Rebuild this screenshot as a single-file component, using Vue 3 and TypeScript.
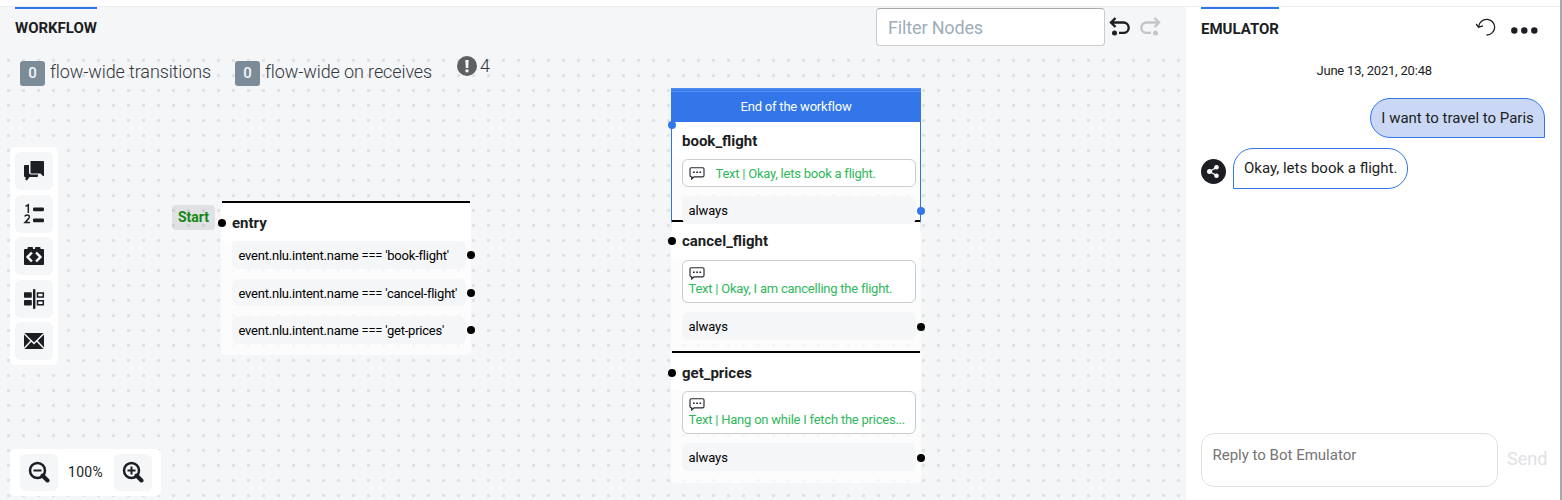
<script setup lang="ts">
interface Row { label: string }
interface FlowNode {
  id: string
  left: number
  top: number
  height: number
  message?: string
  inline?: boolean
  rows: Row[]
  selected?: boolean
}

const nodes: FlowNode[] = [
  {
    id: 'entry', left: 221, top: 201, height: 154,
    rows: [
      { label: "event.nlu.intent.name === 'book-flight'" },
      { label: "event.nlu.intent.name === 'cancel-flight'" },
      { label: "event.nlu.intent.name === 'get-prices'" },
    ],
  },
  { id: 'book_flight', left: 671, top: 88, height: 144, selected: true, inline: true, message: 'Okay, lets book a flight.', rows: [{ label: 'always' }] },
  { id: 'cancel_flight', left: 671, top: 220, height: 131, message: 'Okay, I am cancelling the flight.', rows: [{ label: 'always' }] },
  { id: 'get_prices', left: 671, top: 351, height: 132, message: 'Hang on while I fetch the prices...', rows: [{ label: 'always' }] },
]
const counters = ['flow-wide transitions', 'flow-wide on receives']
const tools = ['say', 'execute', 'code', 'split', 'mail']
</script>

<template>
  <div class="app">
    <div class="strip"></div>
    <main class="studio">
      <section class="canvas">
        <header class="bar">
          <h1 class="tab workflow"><span>WORKFLOW</span></h1>
          <div class="actions">
            <input class="filter" placeholder="Filter Nodes" />
            <svg class="undo" width="21" height="19" viewBox="0 0 21 19"><path d="M6.500 1 2 5.500l4.500 4.500M2.500 5.500H14.500a5.200 5.200 0 0 1 0 10.400H10" /><circle cx="5.500" cy="16" r="2.500" /></svg>
            <svg class="undo redo" width="21" height="19" viewBox="0 0 21 19"><path d="M6.500 1 2 5.500l4.500 4.500M2.500 5.500H14.500a5.200 5.200 0 0 1 0 10.400H10" /><circle cx="5.500" cy="16" r="2.500" /></svg>
          </div>
        </header>
        <div class="counters">
          <div v-for="c in counters" :key="c" class="counter"><b>0</b><span>{{ c }}</span></div>
          <div class="issues">
            <svg width="20" height="20" viewBox="0 0 20 20"><circle cx="10" cy="10" r="10" fill="#5f6062" /><path d="M8.300 4h3.400l-.5 8H8.800zM8.500 13.500h3v2.700h-3z" fill="#f5f6f8" /></svg>
            <span>4</span>
          </div>
        </div>

        <div class="start">Start</div>
        <article
          v-for="n in nodes" :key="n.id" class="node" :class="{ selected: n.selected }"
          :style="{ left: n.left + 'px', top: n.top + 'px', height: n.height + 'px' }"
        >
          <div v-if="n.selected" class="banner">End of the workflow</div>
          <div v-else class="rule"></div>
          <div class="head" :class="{ overlap: n.id === 'cancel_flight' }"><i class="port in"></i>{{ n.id }}</div>
          <div v-if="n.message" class="message" :class="{ inline: n.inline }">
            <svg width="16" height="13" viewBox="0 0 16 13"><path d="M2.200.7H13.800Q15 .7 15 1.900V8.600Q15 9.800 13.800 9.800H5L2.700 12V9.800H2.200Q1 9.800 1 8.600V1.900Q1 .7 2.200.7Z" fill="none" stroke="#24272c" stroke-width="1.150" /><path d="M4 4.500h1.700v1.500H4zM7.200 4.500h1.700v1.500H7.200zM10.400 4.500h1.700v1.500h-1.700z" fill="#24272c" /></svg>
            <span>Text | {{ n.message }}</span>
          </div>
          <div class="rows">
            <div v-for="r in n.rows" :key="r.label" class="row"><span>{{ r.label }}</span><i class="port out"></i></div>
          </div>
        </article>

        <nav class="tools">
          <button v-for="t in tools" :key="t">
            <svg width="22" height="22" viewBox="0 0 22 22">
              <g v-if="t === 'say'"><path d="M7.500 1H20q1 0 1 1V16l-1 0-2.500-2.500H8.500q-1 0-1-1z" /><path d="M1 6q0-1 1-1H6v7.500q0 2 2 2h7v1.500q0 1-1 1H6.500L4 20.500 2.500 20V17H2q-1 0-1-1z" /></g>
              <g v-else-if="t === 'execute'"><path d="M2.500 3.300 5.300 1.800V10M1.800 13.500Q2.200 12 4.200 12 6.400 12 6.400 14 6.400 15 2 19.500H7" fill="none" stroke="#1c1e23" stroke-width="1.500" /><rect x="10" y="4.500" width="11" height="3.800" rx="1.300" /><rect x="10" y="15.500" width="11" height="3.800" rx="1.300" /></g>
              <g v-else-if="t === 'code'"><path d="M2 4H4.500V3q0-1 1-1H9q1 0 1 1V4H12V3q0-1 1-1H16.500q1 0 1 1V4H20q1 0 1 1V19q0 1-1 1H2q-1 0-1-1V5q0-1 1-1z" /><path d="M8.900 7.500 4.600 12 8.900 16.500M13.100 7.500 17.400 12 13.100 16.500" fill="none" stroke="#fff" stroke-width="2.500" /></g>
              <g v-else-if="t === 'split'"><rect x="1" y="4.200" width="7.800" height="5.500" rx=".7" /><rect x="1" y="12" width="7.800" height="5.500" rx=".7" /><rect x="10" y="1" width="2.400" height="20" rx="1" /><path d="M14.500 5H20.300V9H14.500zM14.500 12.700H20.300V16.700H14.500z" fill="none" stroke="#1c1e23" stroke-width="1.500" /></g>
              <g v-else><path d="M1 3H21V19H1z" /><path d="M1 3.500 11 13.500 21 3.500M1 18.500 8 11M21 18.500 14 11" fill="none" stroke="#f5f6f8" stroke-width="1.500" /></g>
            </svg>
          </button>
        </nav>

        <div class="zoom">
          <button><svg width="22" height="22" viewBox="0 0 22 22"><path d="M14.500 14.500 19.500 19.500" class="handle" /><circle cx="9.500" cy="9.500" r="7.500" class="lens" /><path d="M5.500 9.500h8" class="sign" /></svg></button>
          <span>100%</span>
          <button><svg width="22" height="22" viewBox="0 0 22 22"><path d="M14.500 14.500 19.500 19.500" class="handle" /><circle cx="9.500" cy="9.500" r="7.500" class="lens" /><path d="M5.500 9.500h8M9.500 5.500v8" class="sign" /></svg></button>
        </div>
      </section>

      <aside class="emulator">
        <header class="ehead">
          <h2 class="tab"><span>EMULATOR</span></h2>
          <svg class="reload" width="21" height="19" viewBox="0 0 21 19"><path d="M3.700 8.500A8 7.800 0 1 1 11.500 17M1.200 6 3.500 9.200 8 7.800" fill="none" stroke="#1c1e23" stroke-width="1.300" /></svg>
          <svg class="more" width="27" height="7" viewBox="0 0 27 7"><circle cx="3.300" cy="3.500" r="3.200" /><circle cx="13.300" cy="3.500" r="3.200" /><circle cx="23.300" cy="3.500" r="3.200" /></svg>
        </header>
        <time>June 13, 2021, 20:48</time>
        <div class="bubble user"><span>I want to travel to Paris</span></div>
        <div class="reply">
          <svg width="25" height="25" viewBox="0 0 25 25"><circle cx="12.500" cy="12.500" r="12.500" fill="#1c1e23" /><path d="M15.500 8.500 8.500 12.500 15.500 16.500" fill="none" stroke="#fff" stroke-width="1.300" /><circle cx="15.500" cy="8.300" r="2.300" fill="#fff" /><circle cx="8.500" cy="12.500" r="2.500" fill="#fff" /><circle cx="15.500" cy="16.700" r="2.300" fill="#fff" /></svg>
          <div class="bubble bot"><span>Okay, lets book a flight.</span></div>
        </div>
        <footer class="composer">
          <textarea placeholder="Reply to Bot Emulator"></textarea>
          <span>Send</span>
        </footer>
      </aside>
    </main>
  </div>
</template>

<style>
html, body { overflow: hidden; }
</style>
<style scoped>
.app { width: 1562px; height: 500px; display: flex; flex-direction: column; background: #fff; color: #1c1e23; font-family: Roboto, "Liberation Sans", sans-serif; box-sizing: border-box; border-right: 2px solid #a9a9a9; overflow: hidden; }
.app * { box-sizing: border-box; }
.strip { height: 7px; flex: none; border-bottom: 1px solid #ebedef; }
.studio { display: flex; height: 493px; }
.canvas { position: relative; width: 1186px; flex: none; background-color: #f5f6f8; background-image: linear-gradient(#f5f6f8, #f5f6f8), conic-gradient(from 270deg at 3px 3px, #e1e2e4 90deg, transparent 0); background-size: 100% 50px, 15px 15px; background-position: 0 0, 7px 7px; background-repeat: no-repeat, repeat; }
.bar { display: flex; justify-content: space-between; height: 43px; padding-left: 15px; padding-right: 25px; }
.tab { margin: 0; border-top: 2px solid #3276ea; font-size: 15px; line-height: 18px; font-weight: 700; padding-top: 10px; white-space: nowrap; height: 34px; }
.workflow { width: 82px; }
.actions { display: flex; padding-top: 1px; }
.filter { width: 229px; height: 38px; border: 1px solid #ccc; border-top-color: #aaa; border-radius: 4px; background: #fff; padding: 0 12px 0 11px; font: 400 18px Roboto, sans-serif; letter-spacing: -.15px; outline: none; }
.filter::placeholder { color: #a0adb8; }
.undo { margin: 9px 0 0 4px; fill: none; stroke: #1c1e23; stroke-width: 2.4; }
.undo circle { fill: #1c1e23; stroke: none; }
.redo { transform: scaleX(-1); opacity: .22; margin-left: 10px; }
.counters { display: flex; padding-left: 20px; height: 40px; color: #32373d; font-size: 18px; font-weight: 300; line-height: 22px; }
.counter { display: flex; align-items: flex-start; padding-top: 11px; width: 215px; white-space: nowrap; letter-spacing: -.11px; }
.counter b { width: 25px; height: 25px; margin-right: 5px; border-radius: 3px; background: #7b8b98; color: #f5f6f8; font-size: 15px; line-height: 24px; font-weight: 500; text-align: center; }
.issues { display: flex; gap: 3px; padding-top: 6px; margin-left: 7px; }
.issues span { margin-top: -1px; }
.start { position: absolute; left: 172px; top: 198px; width: 43px; height: 25px; border-radius: 4px; background: rgba(120,120,120,.16); color: #138713; font-weight: 700; font-size: 14px; line-height: 25px; text-align: center; }
.node { position: absolute; width: 250px; margin-top: -7px; border-radius: 5px; background: rgba(255,255,255,.7); padding-left: 1px; padding-right: 1px; }
.rule { height: 2px; background: #000; }
.head { position: relative; height: 38px; line-height: 40px; margin: 0 -1px; padding-left: 11px; background: #fff; border-radius: 0 0 5px 5px; font-size: 15px; font-weight: 700; }
.overlap { background: linear-gradient(90deg, transparent 1px, #fff 1px 249px, transparent 249px), rgba(255,255,255,.7); line-height: 38px; }
.port { position: absolute; width: 8px; height: 8px; border-radius: 50%; background: #000; }
.port.in { left: -3px; top: 16px; }
.overlap .port.in { top: 15px; }
.port.out { right: -9px; top: 10px; }
.message + .rows .port.out { top: 10.500px; }
.selected { padding: 0; border: 1px solid #2f73e8; border-top: 0; border-bottom: 0; border-radius: 0; }
.selected .banner { height: 34px; margin: 0 -1px; background: linear-gradient(#4986ed 0 2px, #3276ea 2px 3px, #5990ee 3px 4px, #3276ea 4px); color: #fff; font-size: 13px; letter-spacing: -.2px; line-height: 37px; text-align: center; }
.selected .head { height: 37px; margin: 0; padding-left: 10px; line-height: 38px; }
.selected .port { background: #3276ea; }
.selected .port.in { top: -1px; left: -4px; }
.message { width: 234px; height: 43px; margin-left: 10px; border: 1px solid #c9cdd1; border-radius: 6px; background: #fff; padding: 6px 6px 0; color: #30b85b; font-size: 13px; letter-spacing: -.23px; line-height: 16px; white-space: nowrap; }
.message svg { display: block; height: 13px; }
.message span { display: block; margin-top: 1px; margin-left: -.5px; }
.message.inline { display: flex; height: 28px; padding-top: 7px; gap: 11px; }
.message.inline span { margin-top: -1px; }
.rows { display: flex; flex-direction: column; gap: 10px; padding: 9px 4px 0 10px; }
.head + .rows { padding-top: 0; }
.row { position: relative; z-index: 2; height: 27.500px; border-radius: 6px; background: #f5f6f8; padding-left: 6.500px; font-size: 13px; letter-spacing: -.22px; line-height: 29px; color: #000; white-space: nowrap; }
.message + .rows .row { letter-spacing: -.1px; }
.tools { position: absolute; left: 10px; top: 140px; width: 48px; height: 218px; border-radius: 5px; background: #fff; padding: 5px; display: flex; flex-direction: column; gap: 4.600px; }
button { border: 0; padding: 0; background: #f5f6f8; border-radius: 6px; width: 38px; height: 38px; display: grid; place-items: center; flex: none; fill: #1c1e23; }
.zoom { position: absolute; left: 10px; top: 442px; width: 151px; height: 47px; border-radius: 5px; background: #fff; padding: 5px 9px 5px 10px; display: flex; justify-content: space-between; font-size: 14px; line-height: 37px; }
.zoom span { letter-spacing: .3px; margin-left: -1px; }
.zoom button { height: 37px; }
.zoom svg { margin-top: -1px; }
.handle { stroke: #1c1e23; stroke-width: 4; stroke-linecap: round; }
.lens { fill: none; stroke: #1c1e23; stroke-width: 2.5; }
.sign { stroke: #1c1e23; stroke-width: 2; }
.emulator { flex: 1; display: flex; flex-direction: column; padding: 0 15px; background: #fff; }
.ehead { display: flex; height: 55px; }
.ehead .tab { width: 78px; margin-right: auto; padding-top: 11px; }
.reload { margin: 11px 15px 0 0; }
.more { margin: 19.500px 9px 0 0; fill: #1c1e23; }
time { font-size: 13px; letter-spacing: -.2px; line-height: 18px; text-align: center; height: 36px; }
.bubble { border: 1px solid #3276ea; border-radius: 20px; font-size: 15px; line-height: 18px; padding: 10px 11px; height: 40px; white-space: nowrap; }
.user { align-self: flex-end; width: 175px; margin-right: 2px; padding-left: 10px; border-bottom-right-radius: 0; background: #cad8f5; }
.reply { display: flex; gap: 7px; margin-top: 10px; }
.reply svg { margin-top: 11px; }
.bot { width: 175px; height: 41px; border-bottom-left-radius: 0; padding-left: 10px; }
.composer { display: flex; margin-top: auto; height: 67px; gap: 9px; }
textarea { width: 297px; height: 54px; resize: none; border: 1px solid #e0e0e0; border-radius: 13px; padding: 11px 10.500px; font: 400 15px/20px Roboto, sans-serif; outline: none; flex: none; overflow: hidden; }
textarea::placeholder { color: #757575; }
.composer span { color: #e1e2e4; font-size: 18px; line-height: 52px; }
</style>
